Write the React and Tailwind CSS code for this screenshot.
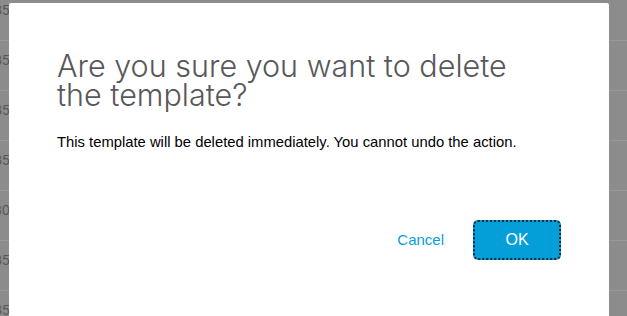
import React from "react";

const labels = ["35", "35", "35", "35", "30", "35", "35"];

export default function App() {
  return (
    <div className="relative w-[627px] h-[316px] overflow-hidden bg-[#8c8c8c]" style={{ fontFamily: '"Inter", "Liberation Sans", Arial, sans-serif' }}>
      <div className="flex flex-col -mt-[9px]">
        {labels.map((l, i) => (
          <div key={i} className="h-[50px] shrink-0 border-b border-[#999999] pt-[12px]">
            <div className="w-[10px] flex justify-end text-[13px] leading-[14px] text-[#575757] whitespace-nowrap">
              <span>{l}</span>
            </div>
          </div>
        ))}
      </div>
      <div className="absolute left-[9px] top-[3px] w-[600px] h-[330px] bg-white rounded-[2px] pl-[48px] pr-[48px]" style={{ fontFamily: '"Liberation Sans", Arial, sans-serif' }}>
        <h1 className="mt-[48px] text-[30.5px] leading-[29px] text-[#58585b] font-light w-[480px]" style={{ fontFamily: '"Inter", "Liberation Sans", sans-serif' }}>
          Are you sure you want to delete the template?
        </h1>
        <p className="mt-[22px] text-[14.8px] text-black">
          This template will be deleted immediately. You cannot undo the action.
        </p>
        <div className="flex justify-end items-center mt-[67px] gap-[29px]">
          <button className="text-[#049fd9] text-[15px]">Cancel</button>
          <button className="w-[88px] h-[40px] rounded-[5px] bg-[#049fd9] text-white text-[16px] border-2 border-dotted border-[#0a2a3a]">OK</button>
        </div>
      </div>
    </div>
  );
}
